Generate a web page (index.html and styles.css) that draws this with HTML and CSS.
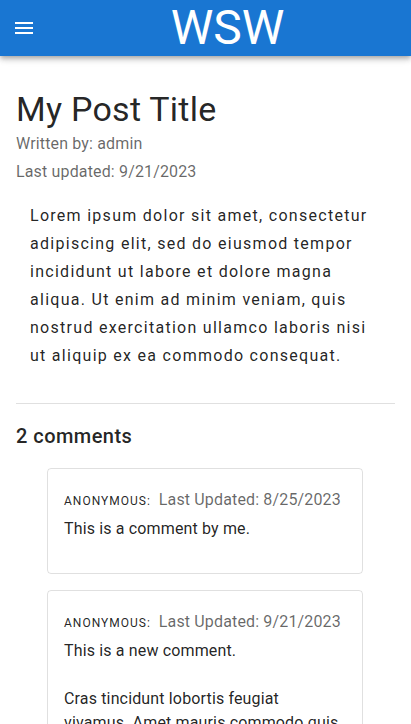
FILE: index.html
```html
<!DOCTYPE html>
<html lang="en">
<head>
<meta charset="utf-8">
<title>WSW</title>
<link rel="stylesheet" href="styles.css">
</head>
<body>
<header class="appbar">
  <div class="toolbar">
    <button class="menu-btn" aria-label="menu">
      <svg viewBox="0 0 24 24" width="24" height="24"><path d="M3 18h18v-2H3zm0-5h18v-2H3zm0-7v2h18V6z" fill="#fff"/></svg>
    </button>
    <h1 class="brand">WSW</h1>
  </div>
</header>
<main class="container">
  <h2 class="post-title">My Post Title</h2>
  <div class="meta">Written by: admin</div>
  <div class="meta">Last updated: 9/21/2023</div>
  <p class="post-body">Lorem ipsum dolor sit amet, consectetur adipiscing elit, sed do eiusmod tempor incididunt ut labore et dolore magna aliqua. Ut enim ad minim veniam, quis nostrud exercitation ullamco laboris nisi ut aliquip ex ea commodo consequat.</p>
  <hr class="divider">
  <h3 class="comments-title">2 comments</h3>
  <div class="comments">
    <div class="card">
      <div class="card-head"><span class="overline">Anonymous:</span><span class="updated">Last Updated: 8/25/2023</span></div>
      <div class="card-text">This is a comment by me.</div>
    </div>
    <div class="card">
      <div class="card-head"><span class="overline">Anonymous:</span><span class="updated">Last Updated: 9/21/2023</span></div>
      <div class="card-text">This is a new comment.

Cras tincidunt lobortis feugiat vivamus. Amet mauris commodo quis imperdiet massa tincidunt nunc pulvinar.</div>
    </div>
  </div>
</main>
</body>
</html>
```
FILE: styles.css
```css
* { box-sizing: border-box; }
html, body { margin: 0; padding: 0; }
body {
  font-family: Roboto, "Liberation Sans", Arial, sans-serif;
  color: rgba(0,0,0,0.87);
  background: #fff;
  width: 411px;
  overflow: hidden;
}
.appbar {
  background: #1976d2;
  color: #fff;
  box-shadow: 0 2px 4px -1px rgba(0,0,0,0.2), 0 4px 5px 0 rgba(0,0,0,0.14), 0 1px 10px 0 rgba(0,0,0,0.12);
  position: relative;
  z-index: 2;
}
.toolbar {
  height: 56px;
  display: flex;
  align-items: center;
  padding: 0 16px;
}
.menu-btn {
  background: none;
  border: 0;
  padding: 8px;
  margin-left: -12px;
  margin-right: 16px;
  width: 40px;
  height: 40px;
  display: flex;
  align-items: center;
  justify-content: center;
}
.menu-btn svg { display: block; }
.brand {
  flex: 1;
  margin: 0;
  text-align: center;
  font-size: 48px;
  font-weight: 400;
  line-height: 56px;
}
.container {
  padding: 32px 16px 0;
}
.post-title {
  margin: 0;
  font-size: 34px;
  font-weight: 400;
  line-height: 42px;
  letter-spacing: 0.25px;
}
.meta {
  font-size: 16px;
  line-height: 28px;
  color: rgba(0,0,0,0.6);
  letter-spacing: 0.15px;
}
.post-body {
  margin: 16px 0 0;
  padding: 0 14px;
  font-size: 16px;
  line-height: 28px;
  letter-spacing: 0.08em;
}
.divider {
  margin: 33px 0 0;
  border: 0;
  border-top: 1px solid rgba(0,0,0,0.12);
}
.comments-title {
  margin: 16px 0 0;
  font-size: 20px;
  font-weight: 500;
  line-height: 32px;
  letter-spacing: 0.45px;
}
.comments {
  margin-top: 16px;
  padding-left: 31px;
  display: flex;
  flex-direction: column;
  align-items: flex-start;
  gap: 16px;
}
.card {
  width: 316px;
  border: 1px solid rgba(0,0,0,0.12);
  border-radius: 4px;
  padding: 16px 16px 32px;
}
.card-head {
  display: flex;
  align-items: baseline;
  gap: 8px;
}
.overline {
  font-size: 12px;
  line-height: 32px;
  text-transform: uppercase;
  letter-spacing: 1px;
}
.updated {
  font-size: 16px;
  color: rgba(0,0,0,0.6);
  letter-spacing: 0.15px;
}
.card-text {
  font-size: 16px;
  line-height: 24px;
  letter-spacing: 0.15px;
  white-space: pre-line;
}
```
